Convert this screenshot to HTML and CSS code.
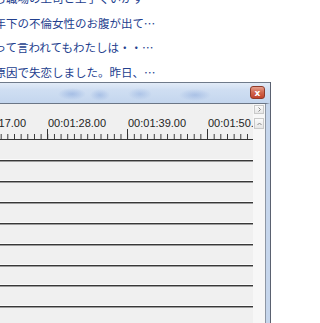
FILE: index.html
```html
<!DOCTYPE html>
<html lang="ja">
<head>
  <meta charset="UTF-8" />
  <title>タイムライン</title>
  <link rel="stylesheet" href="styles.css">
</head>
<body>
  <ul class="feed">
    <li><a href="#">先月から職場の上司と上手くいかず相談したいです</a></li>
    <li><a href="#">旦那が年下の不倫女性のお腹が出てきて困っています</a></li>
    <li><a href="#">重たいって言われてもわたしは・・どうすればいいの</a></li>
    <li><a href="#">性格が原因で失恋しました。昨日、彼から連絡が来て</a></li>
  </ul>

  <div class="window">
    <div class="titlebar">
      <button class="close" type="button">x</button>
    </div>
    <div class="body">
      <div class="client">
        <div class="timeline">
          <div class="ruler">
            <div class="labels">
              <span>00:01:17.00</span>
              <span>00:01:28.00</span>
              <span>00:01:39.00</span>
              <span>00:01:50.00</span>
            </div>
            <div class="ticks"></div>
          </div>
          <div class="rows">
            <div class="row"></div>
            <div class="row"></div>
            <div class="row"></div>
            <div class="row"></div>
            <div class="row"></div>
            <div class="row"></div>
            <div class="row"></div>
            <div class="row"></div>
          </div>
        </div>
        <div class="vscroll">
          <div class="sbtn">
            <svg width="7" height="7" viewBox="0 0 7 7"><polyline points="2.5,1.5 4.5,3.5 2.5,5.5" fill="none" stroke="#8a8a8a" stroke-width="1"/></svg>
          </div>
          <div class="sbtn up">
            <svg width="7" height="8" viewBox="0 0 7 8"><polyline points="1.5,5 3.5,3 5.5,5" fill="none" stroke="#8a8a8a" stroke-width="1"/></svg>
          </div>
        </div>
      </div>
    </div>
  </div>
</body>
</html>
```

FILE: styles.css
```css
* {
  box-sizing: border-box;
}
body {
  margin: 0;
  width: 320px;
  height: 323px;
  overflow: hidden;
  background: #fff;
  font-family: "Liberation Sans", Arial, sans-serif;
}
.feed {
  list-style: none;
  margin: -14px 0 0 -40px;
  padding: 0;
  height: 96px;
  width: 200px;
}
.feed li {
  height: 24.5px;
  line-height: 24.5px;
  white-space: nowrap;
  overflow: hidden;
  text-overflow: ellipsis;
  font-family: "Noto Sans CJK JP", sans-serif;
  font-size: 11.5px;
  color: #23408e;
}
.feed a {
  color: #23408e;
  text-decoration: none;
}
.window {
  width: 271px;
  border-right: 1px solid #5a6170;
}
.titlebar {
  height: 21px;
  border-top: 1px solid #6f7a8a;
  display: flex;
  justify-content: flex-end;
  align-items: flex-start;
  padding: 3px 5px 0 0;
  background:
    radial-gradient(ellipse 14px 6px at 72px 11px, rgba(120, 155, 215, 0.45), transparent),
    radial-gradient(ellipse 10px 6px at 100px 12px, rgba(120, 155, 215, 0.4), transparent),
    radial-gradient(ellipse 12px 6px at 140px 11px, rgba(120, 155, 215, 0.35), transparent),
    radial-gradient(ellipse 16px 6px at 195px 12px, rgba(110, 145, 210, 0.35), transparent),
    linear-gradient(#e2ebf7, #cfdef2 35%, #c4d6ee);
}
.close {
  width: 15px;
  height: 13px;
  padding: 0;
  border: 1px solid #8e3b2a;
  border-radius: 3px;
  background: linear-gradient(#e6a08e, #d26a52 45%, #c2432b);
  color: #fff;
  font: bold 9px/10px "DejaVu Sans", sans-serif;
}
.body {
  border-top: 1px solid #6b7686;
  border-right: 4px solid #c6d6ec;
}
.client {
  display: flex;
  width: 266px;
  height: 230px;
  background: #f0f0f0;
  border-right: 1px solid #8d96a3;
}
.timeline {
  width: 253px;
  overflow: hidden;
}
.ruler {
  padding-top: 13px;
  height: 36px;
  overflow: hidden;
}
.labels {
  display: flex;
  margin-left: -32px;
  height: 12px;
  line-height: 12px;
  font-size: 11px;
  color: #1e1e1e;
  white-space: nowrap;
}
.labels span {
  flex: 0 0 80px;
}
.ticks {
  height: 11px;
  border-bottom: 1px solid #333;
  background:
    linear-gradient(90deg, #333 1px, transparent 1px) 47px 0 / 80px 100% repeat-x,
    linear-gradient(90deg, #333 1px, transparent 1px) 0.7px 100% / 6.667px 5px repeat-x;
}
.rows {
  padding-top: 0.4px;
}
.row {
  height: 20.86px;
  border-bottom: 1px solid #383838;
  box-shadow: inset 0 -1px #fbfbfb, 0 1px #9c9c9c;
}
.vscroll {
  width: 12px;
  background: #f7f7f7;
  padding: 1px 0 0 1px;
}
.sbtn {
  display: flex;
  align-items: center;
  justify-content: center;
  width: 10px;
  height: 9px;
  border: 1px solid #c9c9c9;
  background: linear-gradient(#fbfbfb, #e6e6e6);
}
.sbtn.up {
  margin-top: 4px;
  height: 11px;
}
```
